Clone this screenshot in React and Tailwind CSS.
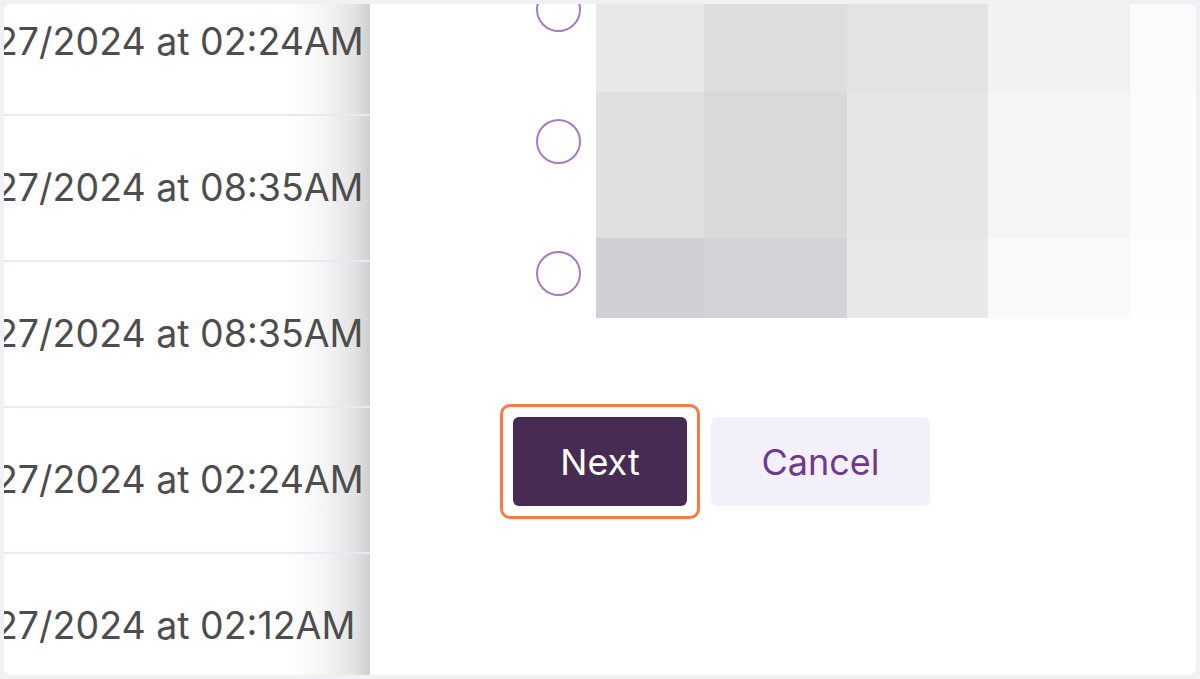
import React from 'react';

const rows = [
  '27/2024 at 02:24AM',
  '27/2024 at 08:35AM',
  '27/2024 at 08:35AM',
  '27/2024 at 02:24AM',
  '27/2024 at 02:12AM',
];

// blurred preview, one entry per pixel block
const cells = [
  ['bg-[#e8e8e8]', 'bg-[#dedede]', 'bg-[#e3e3e3]', 'bg-[#f2f2f2]', 'bg-[#fbfbfb]'],
  ['bg-[#e0e0e0]', 'bg-[#d9d9d9]', 'bg-[#e6e6e6]', 'bg-[#f5f5f5]', 'bg-[#fcfcfc]'],
  ['bg-[#d1cfd4]', 'bg-[#d4d2d6]', 'bg-[#e8e8e8]', 'bg-[#f9f9f9]', 'bg-[#fdfdfd]'],
];

export default function App() {
  return (
    <div className="w-[1200px] h-[679px] bg-[#f1f0f5] p-[4px] font-['Inter','Liberation_Sans',sans-serif]">
      <div className="h-full rounded-lg overflow-hidden bg-white flex">
        <div className="w-[366px] shrink-0 overflow-hidden bg-[linear-gradient(to_right,#ffffff_78%,#f4f4f4_88%,#e2e2e2_96%,#cfcfcf_100%)]">
          <div className="mt-[-34px]">
            {rows.map((r, i) => (
              <div key={i} className="h-[146px] border-b-2 border-[#ebe8f6] flex items-center">
                <span className="ml-[-9px] whitespace-nowrap text-[37.5px] text-[#4d4d4d]">{r}</span>
              </div>
            ))}
          </div>
        </div>

        <div className="flex-1 overflow-hidden pl-[130px]">
          <div className="flex pl-[36px]">
            <div className="flex flex-col gap-[87px] mt-[-17px] w-[45px] shrink-0">
              <div className="w-[45px] h-[45px] rounded-full border-2 border-[#a57cc2]" />
              <div className="w-[45px] h-[45px] rounded-full border-2 border-[#a57cc2]" />
              <div className="w-[45px] h-[45px] rounded-full border-2 border-[#a57cc2]" />
            </div>
            <div className="ml-[15px] grid grid-cols-[108px_143px_141px_142px_80px] grid-rows-[88px_146px_80px] shrink-0">
              {cells.flat().map((c, i) => (
                <div key={i} className={c} />
              ))}
            </div>
          </div>

          <div className="mt-[99px] flex gap-[24px] pl-[13px]">
            <div className="relative">
              <div className="absolute -inset-[13px] rounded-[10px] border-[3px] border-[#fa7a43]" />
              <button className="w-[174px] h-[89px] rounded-[6px] bg-[#472b52] text-white text-[36px]">Next</button>
            </div>
            <button className="w-[219px] h-[89px] rounded-[6px] bg-[#f4f0fb] text-[#6e3a8c] text-[36px]">Cancel</button>
          </div>
        </div>
      </div>
    </div>
  );
}
